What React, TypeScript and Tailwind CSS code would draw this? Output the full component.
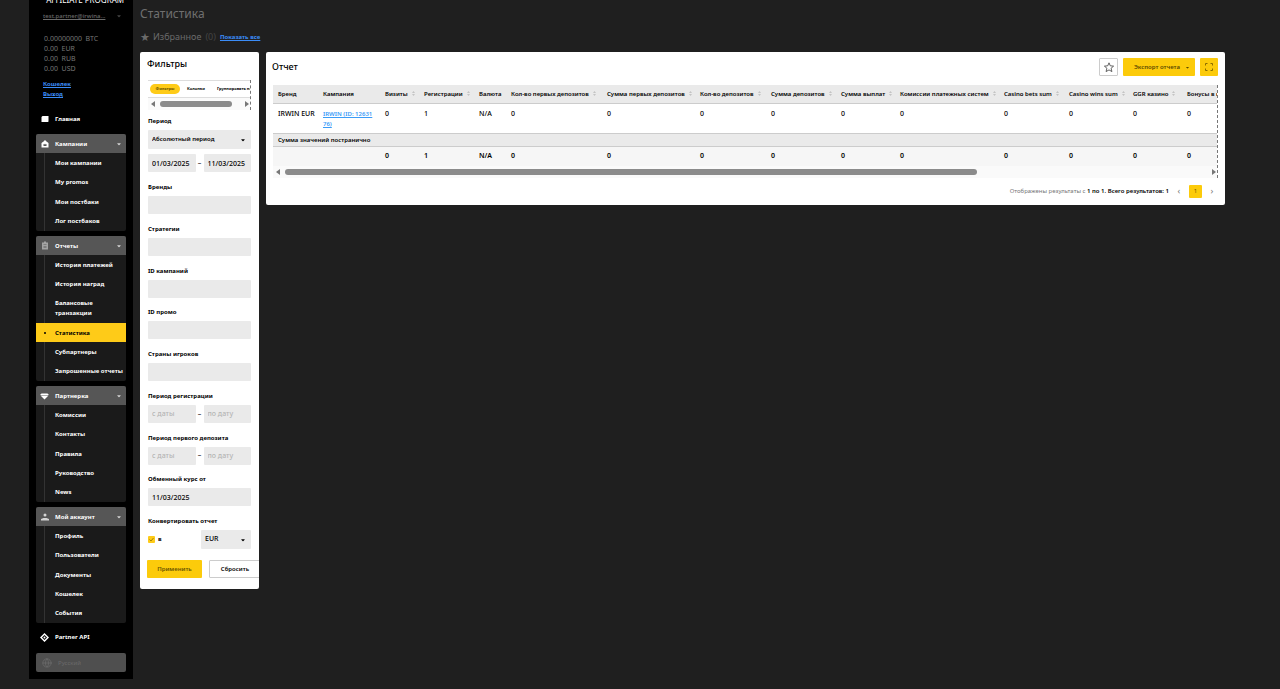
import type { ReactNode } from "react"
import { Globe } from "lucide-react"
import { FaCaretDown } from "react-icons/fa"
import clsx from "clsx"

type MenuItem = { label: string; tall?: boolean; active?: boolean }
type MenuGroup = { title: string; icon: ReactNode; listClass: string; items: MenuItem[] }

const HomeIcon = () => (
    <svg viewBox="0 0 16 16" className="size-2 fill-white">
        <path d="M1 4 3 2h12v11l-1 1H1z" />
    </svg>
)

const CampaignIcon = () => (
    <svg viewBox="0 0 16 16" className="size-2 fill-white">
        <path fillRule="evenodd" d="M5 3 8 0l3 3 4 3v9H1V6zM5 8v4h6V8L9 9 8 7 7 9z" />
    </svg>
)

const ReportIcon = () => (
    <svg viewBox="0 0 16 18" className="h-[9px] w-2 fill-[#a3a3a3]">
        <path fillRule="evenodd" d="M2 3h4V1h4v2h4v14H2zM5 7h6v1H5zm0 3h6v1H5zm0 3h6v1H5z" />
    </svg>
)

const PartnerIcon = () => (
    <svg viewBox="0 0 18 16" className="h-2 w-[9px] fill-white">
        <path d="M3 3h12l3 3H0zM1 7h16l-8 8z" />
    </svg>
)

const AccountIcon = () => (
    <svg viewBox="0 0 16 16" className="size-2 fill-[#d4d4d4]">
        <circle cx="8" cy="4" r="3" />
        <path d="M0 15v-3l5-2h6l5 2v3z" />
    </svg>
)

const ApiIcon = () => (
    <svg viewBox="0 0 18 18" className="size-[9px] fill-white">
        <path d="m9 0 5 5-2 2-3-3-3 3-2-2zM9 18l-5-5 2-2 3 3 3-3 2 2zM0 9l4-4 2 2-2 2 2 2-2 2zM18 9l-4 4-2-2 2-2-2-2 2-2z" />
        <circle cx="9" cy="9" r="2" />
    </svg>
)

const groups: MenuGroup[] = [
    {
        title: "Кампании",
        icon: <CampaignIcon />,
        listClass: "h-[78px]",
        items: [{ label: "Мои кампании" }, { label: "My promos" }, { label: "Мои постбаки" }, { label: "Лог постбаков" }],
    },
    {
        title: "Отчеты",
        icon: <ReportIcon />,
        listClass: "h-[126px]",
        items: [
            { label: "История платежей" },
            { label: "История наград" },
            { label: "Балансовые транзакции", tall: true },
            { label: "Статистика", active: true },
            { label: "Субпартнеры" },
            { label: "Запрошенные отчеты" },
        ],
    },
    {
        title: "Партнерка",
        icon: <PartnerIcon />,
        listClass: "h-[97px]",
        items: [{ label: "Комиссии" }, { label: "Контакты" }, { label: "Правила" }, { label: "Руководство" }, { label: "News" }],
    },
    {
        title: "Мой аккаунт",
        icon: <AccountIcon />,
        listClass: "h-[97px]",
        items: [{ label: "Профиль" }, { label: "Пользователи" }, { label: "Документы" }, { label: "Кошелек" }, { label: "События" }],
    },
]

const balances = ["0.00000000  BTC", "0.00  EUR", "0.00  RUB", "0.00  USD"]

type Column = { title: string; width: string; value: string; sortable?: boolean }

const columns: Column[] = [
    { title: "Бренд", width: "w-[45px]", value: "IRWIN EUR" },
    { title: "Кампания", width: "w-[62px]", value: "" },
    { title: "Визиты", width: "w-[39px]", value: "0", sortable: true },
    { title: "Регистрации", width: "w-[55px]", value: "1", sortable: true },
    { title: "Валюта", width: "w-[32px]", value: "N/A" },
    { title: "Кол-во первых депозитов", width: "w-[96px]", value: "0", sortable: true },
    { title: "Сумма первых депозитов", width: "w-[93px]", value: "0", sortable: true },
    { title: "Кол-во депозитов", width: "w-[71px]", value: "0", sortable: true },
    { title: "Сумма депозитов", width: "w-[70px]", value: "0", sortable: true },
    { title: "Сумма выплат", width: "w-[59px]", value: "0", sortable: true },
    { title: "Комиссии платежных систем", width: "w-[104px]", value: "0", sortable: true },
    { title: "Casino bets sum", width: "w-[65px]", value: "0", sortable: true },
    { title: "Casino wins sum", width: "w-[64px]", value: "0", sortable: true },
    { title: "GGR казино", width: "w-[54px]", value: "0", sortable: true },
    { title: "Бонусы в казино", width: "w-[80px]", value: "0", sortable: true },
]

const fieldClass =
    "h-[18px] w-full min-w-0 rounded-[1px] bg-[#eaeaea] px-1 text-[7px] font-medium text-black placeholder:text-[#b5b5b5] outline-none"

function SortIcon() {
    return (
        <svg viewBox="0 0 6 10" className="h-[5px] w-[3px] shrink-0 fill-[#c4c4c4]">
            <path d="M3 0 6 4H0zM3 10 0 6h6z" />
        </svg>
    )
}

function ScrollBar({ thumb }: { thumb: string }) {
    return (
        <div className="flex h-3 items-center gap-[5px] bg-[#fafafa] pr-px pl-[3px]">
            <svg viewBox="0 0 4 6" className="h-1.5 w-1 shrink-0 fill-[#777]">
                <path d="M4 0v6L0 3z" />
            </svg>
            <div className="flex-1">
                <div className={clsx("h-1.5 rounded-full bg-[#8b8b8b]", thumb)} />
            </div>
            <svg viewBox="0 0 4 6" className="h-1.5 w-1 shrink-0 fill-[#777]">
                <path d="M0 0v6l4-3z" />
            </svg>
        </div>
    )
}

function SidebarGroup({ group }: { group: MenuGroup }) {
    return (
        <div className="mb-[5px] overflow-hidden rounded-[2px] bg-[#1a1a1a]">
            <button type="button" className="flex h-[19px] w-full items-center bg-[#565656] pr-1 text-left">
                <span className="flex w-[19px] justify-center pr-0.5">{group.icon}</span>
                <span className="flex-1">{group.title}</span>
                <FaCaretDown className="size-1.5 text-[#d4d4d4]" />
            </button>
            <ul className={clsx("flex flex-col", group.listClass)}>
                {group.items.map((item) => (
                    <li key={item.label} className={clsx("flex", item.tall ? "h-[29px] shrink-0" : "min-h-0 flex-1 whitespace-nowrap")}>
                        <a
                            href="#"
                            className={clsx("flex w-full items-center leading-[10px]", item.active && "bg-[#fecb18] text-black")}
                        >
                            <span className="flex w-[19px] shrink-0 items-center justify-center self-stretch pr-0.5">
                                {item.active ? (
                                    <span className="size-0.5 rounded-full bg-black" />
                                ) : (
                                    <span className="h-full w-px bg-[#333]" />
                                )}
                            </span>
                            <span>{item.label}</span>
                        </a>
                    </li>
                ))}
            </ul>
        </div>
    )
}

function Sidebar() {
    return (
        <aside className="w-[104px] shrink-0 bg-black px-[7px] pb-[7px] text-[6px] leading-[10px] font-bold text-white">
            <div className="flex h-[5px] items-end justify-end overflow-hidden pr-0.5 text-[8px] leading-[10px] font-normal whitespace-nowrap">
                AFFILIATE PROGRAM
            </div>
            <div className="mt-[6px] flex items-center justify-between pr-1 pl-[7px] font-medium text-[#6b6b6b]">
                <a href="#" className="underline">
                    test.partner@irwina...
                </a>
                <FaCaretDown className="size-1.5 text-[#444]" />
            </div>
            <ul className="mt-[13px] pl-2 text-[7px] font-normal text-[#757575]">
                {balances.map((balance) => (
                    <li key={balance} className="whitespace-pre">
                        {balance}
                    </li>
                ))}
            </ul>
            <div className="mt-[5px] mb-[15px] flex flex-col items-start pl-[7px] text-[#3b8cf7] underline">
                <a href="#">Кошелек</a>
                <a href="#">Выход</a>
            </div>
            <a href="#" className="mb-[10px] flex items-center">
                <span className="flex w-[19px] justify-center pr-0.5">
                    <HomeIcon />
                </span>
                Главная
            </a>
            <nav>
                {groups.map((group) => (
                    <SidebarGroup key={group.title} group={group} />
                ))}
            </nav>
            <a href="#" className="mt-[9px] mb-[11px] flex items-center">
                <span className="flex w-[19px] justify-center pr-0.5">
                    <ApiIcon />
                </span>
                Partner API
            </a>
            <button type="button" className="flex h-[19px] w-full items-center rounded-[2px] bg-[#4f4f4f] pl-[6px] font-normal text-[#6a6a6a]">
                <Globe className="mr-[6px] size-[10px]" />
                Русский
            </button>
        </aside>
    )
}

function Field({ label, id, children }: { label: string; id: string; children: ReactNode }) {
    return (
        <div>
            <label htmlFor={id} className="mb-1 block text-[6px] leading-[10px] font-bold whitespace-nowrap">
                {label}
            </label>
            {children}
        </div>
    )
}

function DateRange({ id, from, to }: { id: string; from?: string; to?: string }) {
    return (
        <div className="flex items-center text-[7px]">
            <input id={id} defaultValue={from} placeholder="с даты" className={fieldClass} />
            <span className="w-2 shrink-0 text-center">–</span>
            <input aria-label="по дату" defaultValue={to} placeholder="по дату" className={fieldClass} />
        </div>
    )
}

function Filters() {
    return (
        <section className="w-[119px] shrink-0 overflow-hidden rounded-[2px] bg-white px-2 pt-[7px] pb-[11px]">
            <h2 className="-ml-px text-[9px] leading-[10px] font-medium">Фильтры</h2>
            <div className="mt-[11px] overflow-hidden border-r border-dashed border-[#777]">
                <div className="flex h-[18px] items-center border-y border-[#ddd] pl-0.5 text-[4px] font-bold whitespace-nowrap">
                    <button type="button" className="h-[10px] w-[30px] shrink-0 rounded-full bg-[#fecb18] text-[#6b5500]">
                        Фильтры
                    </button>
                    <button type="button" className="ml-[7px]">Колонки</button>
                    <button type="button" className="ml-3">Группировать по</button>
                </div>
                <ScrollBar thumb="w-[90%]" />
            </div>
            <form className="mt-1.5" onSubmit={(e) => e.preventDefault()}>
                <Field label="Период" id="period">
                    <div className="flex h-[19px] items-center rounded-[1px] bg-[#eaeaea] pr-[5px]">
                        <select id="period" className="h-full flex-1 appearance-none pl-1 text-[6px] font-semibold outline-none">
                            <option>Абсолютный период</option>
                        </select>
                        <FaCaretDown className="size-1.5" />
                    </div>
                </Field>
                <div className="mt-[5px] mb-[10px]">
                    <DateRange id="from" from="01/03/2025" to="11/03/2025" />
                </div>
                <div className="grid h-[334px] auto-rows-fr">
                    {["Бренды", "Стратегии", "ID кампаний", "ID промо", "Страны игроков"].map((label) => (
                        <Field key={label} label={label} id={label}>
                            <input id={label} className={clsx(fieldClass, "block")} />
                        </Field>
                    ))}
                    <Field label="Период регистрации" id="registration">
                        <DateRange id="registration" />
                    </Field>
                    <Field label="Период первого депозита" id="deposit">
                        <DateRange id="deposit" />
                    </Field>
                    <Field label="Обменный курс от" id="rate">
                        <input id="rate" defaultValue="11/03/2025" className={clsx(fieldClass, "block")} />
                    </Field>
                </div>
                <Field label="Конвертировать отчет" id="convert">
                    <div className="flex items-center text-[6px]">
                        <span className="relative mr-[3px] size-[7px]">
                            <input
                                id="convert"
                                type="checkbox"
                                defaultChecked
                                className="peer block size-[7px] appearance-none rounded-[1px] bg-[#e5e5e5] checked:bg-[#fecb18]"
                            />
                            <svg
                                viewBox="0 0 14 14"
                                className="pointer-events-none absolute inset-0 hidden fill-none stroke-[#a88400] stroke-2 peer-checked:block"
                            >
                                <path d="m3 7 3 3 5-6" />
                            </svg>
                        </span>
                        <span className="flex-1 font-bold">в</span>
                        <div className="flex h-[19px] w-[50px] items-center rounded-[1px] bg-[#eaeaea] pr-[5px]">
                            <select aria-label="Валюта" className="h-full flex-1 appearance-none pl-1 text-[7px] font-medium outline-none">
                                <option>EUR</option>
                            </select>
                            <FaCaretDown className="size-1.5" />
                        </div>
                    </div>
                </Field>
                <div className="-mx-px mt-[11px] flex gap-[7px] text-[6px] font-semibold">
                    <button type="submit" className="h-[18px] w-[55px] shrink-0 rounded-[1px] bg-[#fccb0b] text-[#6b5500]">
                        Применить
                    </button>
                    <button type="reset" className="h-[18px] w-[52px] shrink-0 rounded-[1px] border border-[#ccc]">
                        Сбросить
                    </button>
                </div>
            </form>
        </section>
    )
}

function Report() {
    return (
        <section className="min-w-0 flex-1 rounded-[2px] bg-white px-[7px] pt-1.5 pb-2">
            <div className="flex h-[18px] items-center">
                <h2 className="-ml-px flex-1 text-[9px] leading-[10px] font-medium">Отчет</h2>
                <button type="button" aria-label="В избранное" className="flex h-[18px] w-[19px] items-center justify-center rounded-[1px] border border-[#ccc]">
                    <svg viewBox="0 0 24 24" className="size-[10px] fill-none stroke-[#444] stroke-2">
                        <path d="m12 2 3 7 8 1-6 5 2 8-7-4-7 4 2-8-6-5 8-1z" />
                    </svg>
                </button>
                <button type="button" className="ml-[5px] flex h-[18px] w-[72px] items-center justify-end gap-[5px] rounded-[1px] bg-[#fccb0b] pr-[5px] text-[6px] font-semibold text-[#5c4a00]">
                    Экспорт отчета
                    <FaCaretDown className="size-[5px]" />
                </button>
                <button type="button" aria-label="На весь экран" className="ml-[5px] flex size-[18px] items-center justify-center rounded-[1px] bg-[#fccb0b]">
                    <svg viewBox="0 0 8 8" className="size-2 fill-none stroke-[#8a6d00]">
                        <path d="M.5 2.5v-2h2M5.5.5h2v2M7.5 5.5v2h-2M2.5 7.5h-2v-2" />
                    </svg>
                </button>
            </div>
            <div className="mt-[9px] overflow-hidden border-r border-dashed border-[#777]">
                <table className="w-[989px] table-fixed text-left text-[6px] leading-[10px]">
                    <thead>
                        <tr className="h-[18px] border-b border-[#ccc] bg-[#eaeaea]">
                            {columns.map((column) => (
                                <th key={column.title} className={clsx("pl-[5px] font-semibold whitespace-nowrap", column.width)}>
                                    <span className="flex items-center gap-1">
                                        {column.title}
                                        {column.sortable && <SortIcon />}
                                    </span>
                                </th>
                            ))}
                        </tr>
                    </thead>
                    <tbody>
                        <tr className="h-[30px] border-b border-[#ccc] align-top">
                            {columns.map((column) => (
                                <td key={column.title} className="pt-[5px] pl-[5px] font-semibold">
                                    {column.title === "Кампания" ? (
                                        <a href="#" className="block w-[52px] break-all text-[#3b9cf7] underline">
                                            IRWIN (ID: 1263176)
                                        </a>
                                    ) : (
                                        <span className="text-[7px] font-medium whitespace-nowrap">{column.value}</span>
                                    )}
                                </td>
                            ))}
                        </tr>
                        <tr className="h-[13px] border-b border-[#ccc] bg-[#eaeaea]">
                            <th colSpan={15} className="pl-[5px] font-semibold">
                                Сумма значений постранично
                            </th>
                        </tr>
                        <tr className="h-5 bg-[#f6f6f6] text-[7px] font-semibold">
                            {columns.map((column, i) => (
                                <td key={column.title} className="pl-[5px]">
                                    {i > 0 && column.value}
                                </td>
                            ))}
                        </tr>
                    </tbody>
                </table>
                <ScrollBar thumb="w-[75%]" />
            </div>
            <div className="mt-[7px] flex h-3 items-center justify-end text-[6px] text-[#777]">
                <p>
                    Отображены результаты с <b className="font-semibold text-black">1 по 1. Всего результатов: 1</b>
                </p>
                <button type="button" className="w-5 text-[9px] leading-3">‹</button>
                <button type="button" className="h-[13px] w-[13px] rounded-[1px] bg-[#fccb0b] text-[#6b5500]">1</button>
                <button type="button" className="w-4 pl-1 text-[9px] leading-3">›</button>
            </div>
        </section>
    )
}

export default function App() {
    return (
        <div className="flex min-h-screen items-start overflow-hidden bg-[#1f1f1f] pl-[29px] font-['Noto_Sans',sans-serif] text-black">
            <Sidebar />
            <main className="min-w-0 flex-1 pr-[55px] pl-[7px]">
                <h1 className="pt-[6px] text-[12px] leading-4 text-[#6f6f6f]">Статистика</h1>
                <div className="mt-[9px] flex h-3 items-center text-[9px] text-[#6a6a6a]">
                    <span className="w-[13px] text-[11px]">★</span>
                    Избранное
                    <span className="ml-1 text-[#444]">(0)</span>
                    <a href="#" className="ml-1 text-[6px] font-bold text-[#3b8cf7] underline">
                        Показать все
                    </a>
                </div>
                <div className="mt-[9px] flex items-start gap-[7px]">
                    <Filters />
                    <Report />
                </div>
            </main>
        </div>
    )
}
